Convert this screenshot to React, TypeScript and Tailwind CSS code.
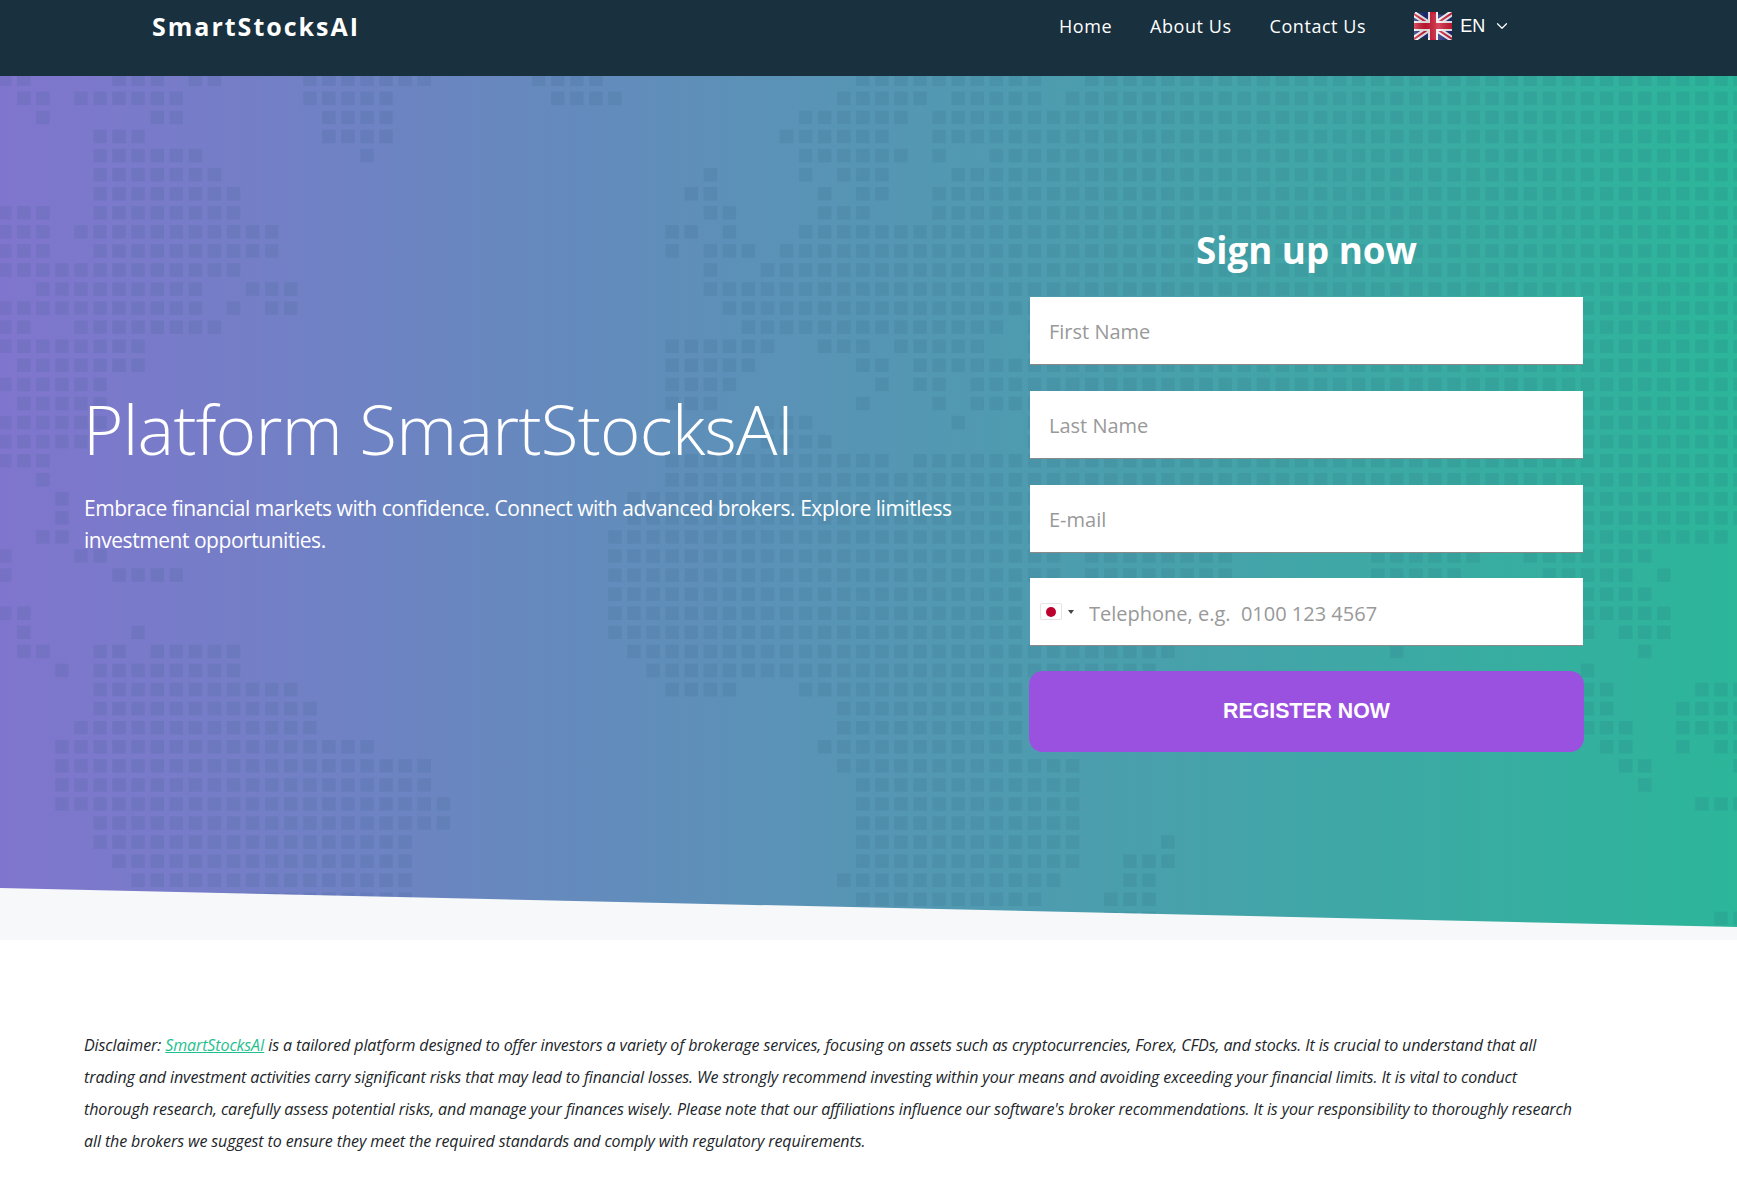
import { ChevronDown } from "lucide-react";

// dark squares of the world map, one string of column ranges per row
const mapRows = [
  "0-1 6-8 10-11 16-22 28-31 45-54 57-91",
  "1-2 4-9 16-20 29-32 44-48 50-54 56-91",
  "2 8-9 17-20 42-47 49-91",
  "5-7 17-20 41-46 49-91",
  "5-10 19 42-47 49 52-91",
  "5-11 37 42 44-46 50-91",
  "5-12 36-37 43 45-46 49-91",
  "0-2 5-12 37-38 43-45 49-91",
  "0-2 4-14 35-36 38 42-91",
  "0-2 5-14 35 37-39 41-91",
  "0-12 37 40-91",
  "2-10 13-15 37-91",
  "0-10 12 14-15 38-91",
  "0-1 4-11 39-52 54-91",
  "0-7 35-40 43-45 47-51 54-91",
  "1-7 35-39 45-46 48-91",
  "0-5 35-38 46 48-49 51-91",
  "1-5 35-37 45 49 51-91",
  "0-5 40-42 50 54-91",
  "0-4 40-43 54-91",
  "0-2 35-46 48-91",
  "2 35-91",
  "3 33-91",
  "3 33-91",
  "2-3 32-90",
  "0 4-5 32-55 57-64 72-77 80-86",
  "0 6-9 32-55 57-64 72-76 81-85 87",
  "32-53 83-86",
  "0-1 32-53 83-87",
  "1 7 32-53 83 85-87",
  "1-2 5-6 8-12 33-61 73 86",
  "3 5-12 34-60 83",
  "5-15 35-38 42-53 83-84 89-91",
  "5-16 44-53 83-84 88-91",
  "4-16 44-53 83-85 88-91",
  "3-19 43-53 84-85 88 90-91",
  "3-22 44-56 85-86 91",
  "3-22 45-56 86",
  "3-23 45-56 89-91",
  "5-23 45-56",
  "5-21 45-56 61",
  "6-21 45-56 59-61",
  "7-21 44-55 59-60",
  "7-21 45-54 58-60",
  "46-54 58-60 90-91",
];

const PITCH = 19.07;

const DotMap = () => (
  <svg className="absolute inset-0 h-full w-full" aria-hidden="true">
    <g fill="#1a4a6e" fillOpacity="0.1">
      {mapRows.flatMap((row, r) =>
        row.split(" ").flatMap((range) => {
          const [from, to = from] = range.split("-").map(Number);
          const cells = [];
          for (let c = from; c <= to; c++) {
            cells.push(
              <rect key={`${r}-${c}`} x={c * PITCH - 2} y={r * PITCH - 3.4} width="13.4" height="13.4" />
            );
          }
          return cells;
        })
      )}
    </g>
  </svg>
);

const UkFlag = () => (
  <svg width="38" height="28" viewBox="0 0 38 28" className="shrink-0">
    <defs>
      <linearGradient id="flagShade" x1="0" y1="0" x2="1" y2="0">
        <stop offset="0" stopColor="#fff" stopOpacity="0.25" />
        <stop offset="0.3" stopColor="#000" stopOpacity="0.12" />
        <stop offset="0.65" stopColor="#fff" stopOpacity="0.2" />
        <stop offset="1" stopColor="#000" stopOpacity="0.12" />
      </linearGradient>
    </defs>
    <path d="M0 2 Q10 -1 19 1.5 T38 1 V27 Q28 29.5 19 27 T0 27 Z" fill="#1d2a78" />
    <path d="M0 2 L38 27 M38 1 L0 27" stroke="#f4f4f6" strokeWidth="6" />
    <path d="M0 2 L38 27 M38 1 L0 27" stroke="#cf1b36" strokeWidth="2" />
    <path d="M19 0 V28 M0 14 H38" stroke="#f4f4f6" strokeWidth="10" />
    <path d="M19 0 V28 M0 14 H38" stroke="#cf1b36" strokeWidth="6" />
    <path d="M0 2 Q10 -1 19 1.5 T38 1 V27 Q28 29.5 19 27 T0 27 Z" fill="url(#flagShade)" />
  </svg>
);

const JapanFlag = () => (
  <span className="flex h-[17px] w-[22px] items-center justify-center rounded-[2px] border border-[#e4e4e4] bg-white">
    <span className="h-[10px] w-[10px] rounded-full bg-[#bc002d]" />
  </span>
);

const fieldClass =
  "h-[68px] w-full border-b border-[#8a8a8a] bg-white px-[19px] pt-[2px] text-[20px] text-[#555] outline-none placeholder:text-[#999]";

const Navbar = () => (
  <header className="flex h-[76px] items-start bg-[#19303e] pl-[152px] text-white">
    <a className="mt-[9px] text-[25px] font-bold leading-[34px] tracking-[2px]">SmartStocksAI</a>
    <nav className="ml-[699px] mt-[12px] flex gap-[38px] text-[18px] leading-[28px] tracking-[0.55px]">
      <a>Home</a>
      <a>About Us</a>
      <a>Contact Us</a>
    </nav>
    <button className="ml-[48px] mt-[12px] flex items-center font-['Liberation_Sans',sans-serif] text-[18px]">
      <UkFlag />
      <span className="ml-[8px]">EN</span>
      <ChevronDown size={18} strokeWidth={1.6} className="ml-[8px]" />
    </button>
  </header>
);

const SignupForm = () => (
  <form className="w-[555px] pt-[153px]">
    <h2 className="mb-[25px] text-center text-[36.7px] font-bold leading-[43px] text-white">Sign up now</h2>
    <div className="flex flex-col gap-[26px] px-px">
      <input className={fieldClass} placeholder="First Name" />
      <input className={fieldClass} placeholder="Last Name" />
      <input className={fieldClass} placeholder="E-mail" />
      <div className="-mt-px flex h-[68px] items-center border-b border-[#8a8a8a] bg-white pl-[10px]">
        <JapanFlag />
        <span className="ml-[6px] h-0 w-0 border-x-[3px] border-t-[4px] border-x-transparent border-t-[#444]" />
        <input
          className="ml-[15px] h-full flex-1 pt-[3px] text-[20px] text-[#555] outline-none placeholder:text-[#999]"
          placeholder="Telephone, e.g.  0100 123 4567"
        />
      </div>
    </div>
    <button
      type="button"
      className="mt-[25px] h-[81px] w-full rounded-[14px] bg-[#9b51df] font-['Liberation_Sans',sans-serif] text-[21.3px] font-bold text-white"
    >
      REGISTER NOW
    </button>
  </form>
);

const Hero = () => (
  <section className="relative h-[864px] bg-[#f6f8fa]">
    <div className="absolute inset-0 bg-[linear-gradient(to_right,#8075ce,#2cb69a)] [clip-path:polygon(0_0,100%_0,100%_851px,0_812px)]">
      <DotMap />
    </div>
    <div className="relative flex pl-[84px]">
      <div className="w-[945px] pt-[309px] text-white">
        <h1 className="-ml-px text-[69px] font-[350] leading-[86px] tracking-[-0.7px]">Platform SmartStocksAI</h1>
        <p className="mt-[21px] w-[880px] text-[21px] leading-[32px] tracking-[-0.46px]">
          Embrace financial markets with confidence. Connect with advanced brokers. Explore limitless investment opportunities.
        </p>
      </div>
      <SignupForm />
    </div>
  </section>
);

export default function App() {
  return (
    <div className="bg-white font-['Open_Sans',sans-serif]">
      <Navbar />
      <Hero />
      <section className="px-[84px] pb-[28px] pt-[89px]">
        <p className="text-[16px] italic leading-[32px] tracking-[-0.1px] text-[#212529]">
          Disclaimer: <a className="text-[#1fbf8f] underline">SmartStocksAI</a> is a tailored platform designed to offer investors a variety of brokerage services, focusing on assets such as cryptocurrencies, Forex, CFDs, and stocks. It is crucial to understand that all
          <br />
          trading and investment activities carry significant risks that may lead to financial losses. We strongly recommend investing within your means and avoiding exceeding your financial limits. It is vital to conduct
          <br />
          thorough research, carefully assess potential risks, and manage your finances wisely. Please note that our affiliations influence our software's broker recommendations. It is your responsibility to thoroughly research
          <br />
          all the brokers we suggest to ensure they meet the required standards and comply with regulatory requirements.
        </p>
      </section>
    </div>
  );
}
